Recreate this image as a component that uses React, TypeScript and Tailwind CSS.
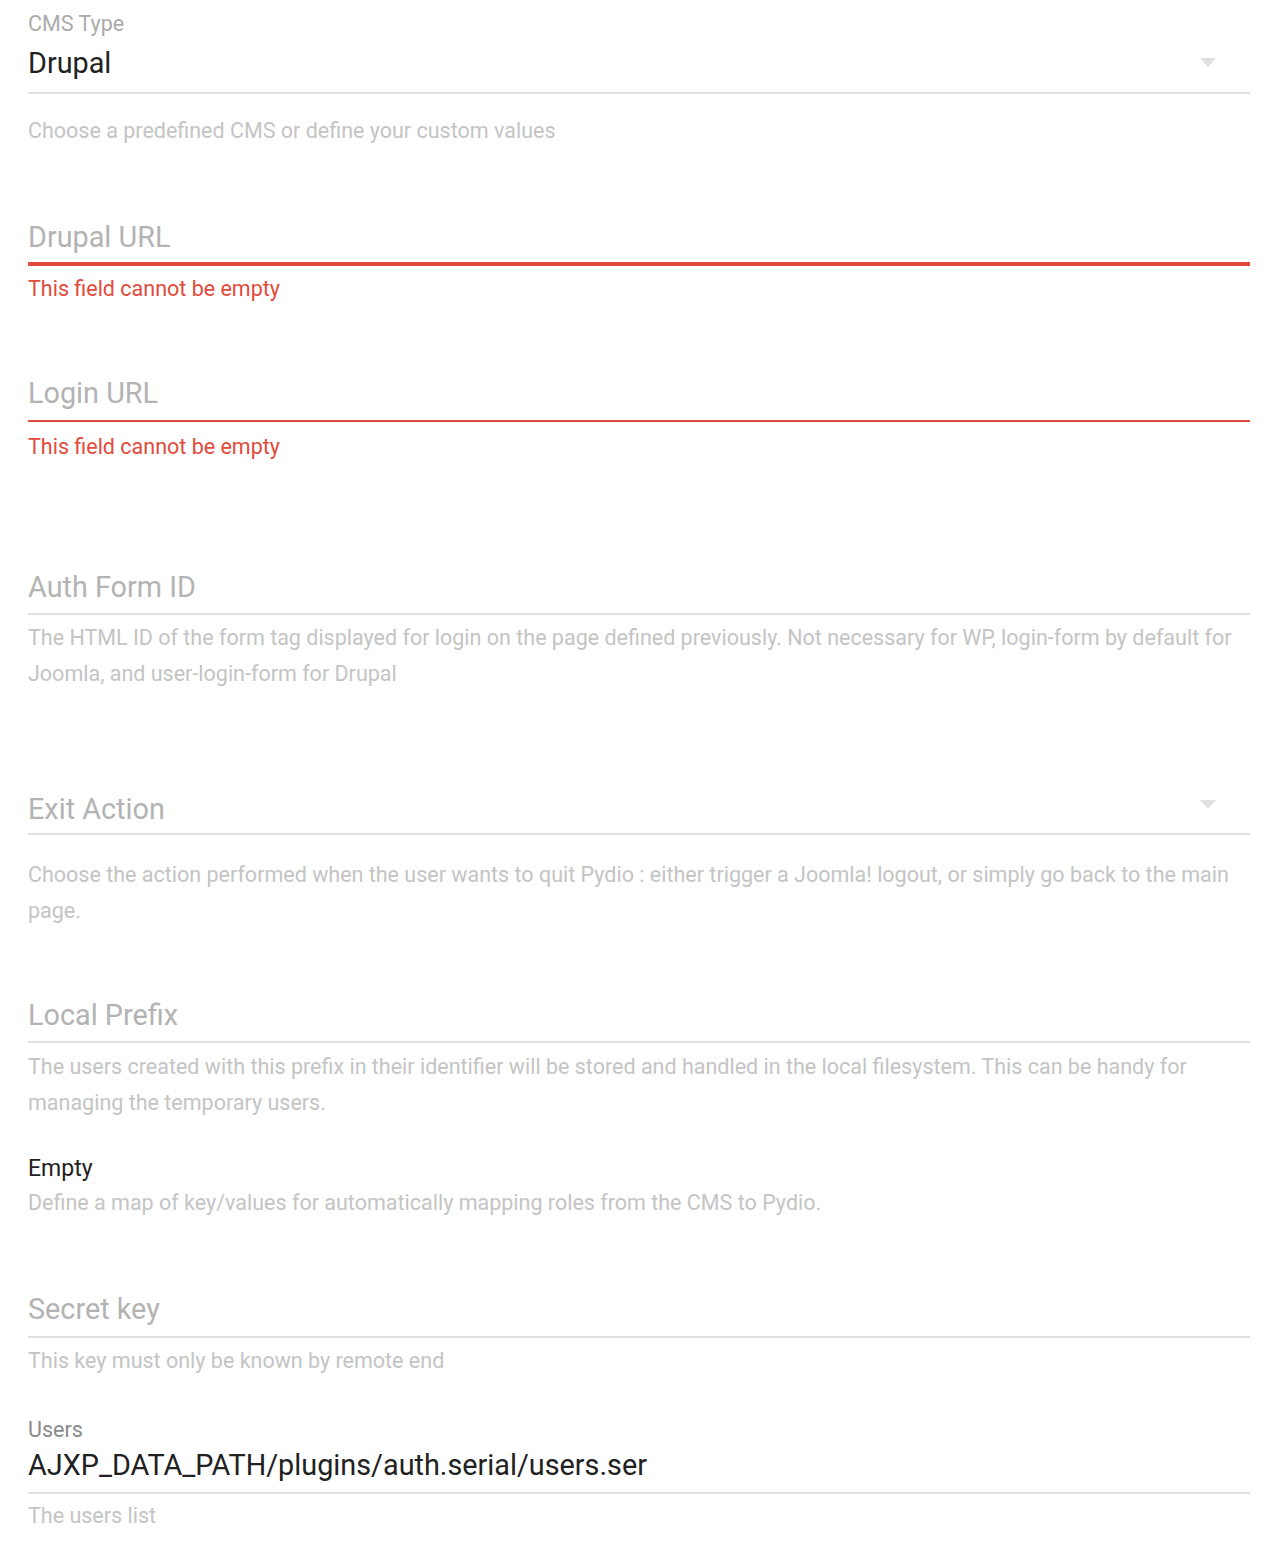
import React from "react";

const font = { fontFamily: "Roboto, 'Noto Sans', Arial, sans-serif" };

function Arrow({ top }: { top: string }) {
  return (
    <svg
      className={"absolute right-[34px] " + top}
      width="16"
      height="9"
      viewBox="0 0 16 9"
    >
      <polygon points="0,0 16,0 8,9" fill="#e0e0e0" />
    </svg>
  );
}

function Underline({ red = false, thick = false }: { red?: boolean; thick?: boolean }) {
  return (
    <div
      className={
        (red ? "bg-[#e24a3b] " : "bg-[#e0e0e0] ") + (thick ? "h-[4px]" : "h-[2px]")
      }
    />
  );
}

export default function App() {
  return (
    <div className="bg-white w-[1276px] min-h-[1562px] pl-[28px] pr-[26px]" style={font}>
      {/* CMS Type */}
      <div className="pt-[12px]">
        <div className="text-[21.5px] leading-[24px] text-[#ababab]">CMS Type</div>
        <div className="relative mt-[9px] h-[36px] text-[28.8px] leading-[36px] text-[#212121]">
          Drupal
          <Arrow top="top-[13px]" />
        </div>
        <div className="mt-[11px]">
          <Underline />
        </div>
        <div className="mt-[19px] text-[21.5px] leading-[36px] text-[#c4c4c4]">
          Choose a predefined CMS or define your custom values
        </div>
      </div>

      {/* Drupal URL */}
      <div className="mt-[69px]">
        <div className="h-[36px] text-[28.8px] leading-[36px] text-[#b3b3b3] pt-[1px]">Drupal URL</div>
        <div className="mt-[8px]">
          <Underline red thick />
        </div>
        <div className="mt-[11px] text-[21.5px] leading-[24px] text-[#e24a3b]">
          This field cannot be empty
        </div>
      </div>

      {/* Login URL */}
      <div className="mt-[73px]">
        <div className="h-[36px] text-[28.8px] leading-[36px] text-[#b3b3b3] pt-[1px]">Login URL</div>
        <div className="mt-[10px]">
          <Underline red />
        </div>
        <div className="mt-[13px] text-[21.5px] leading-[24px] text-[#e24a3b]">
          This field cannot be empty
        </div>
      </div>

      {/* Auth Form ID */}
      <div className="mt-[109px]">
        <div className="h-[36px] text-[28.8px] leading-[36px] text-[#b3b3b3] pt-[1px]">Auth Form ID</div>
        <div className="mt-[9px]">
          <Underline />
        </div>
        <div className="mt-[5px] text-[21.5px] leading-[36px] text-[#c4c4c4]">
          The HTML ID of the form tag displayed for login on the page defined previously. Not necessary for WP, login-form by default for Joomla, and user-login-form for Drupal
        </div>
      </div>

      {/* Exit Action */}
      <div className="mt-[98px]">
        <div className="relative h-[36px] text-[28.8px] leading-[36px] text-[#b3b3b3] pt-[1px]">
          Exit Action
          <Arrow top="top-[10px]" />
        </div>
        <div className="mt-[7px]">
          <Underline />
        </div>
        <div className="mt-[22px] text-[21.5px] leading-[36px] text-[#c4c4c4]">
          Choose the action performed when the user wants to quit Pydio : either trigger a Joomla! logout, or simply go back to the main page.
        </div>
      </div>

      {/* Local Prefix */}
      <div className="mt-[67px]">
        <div className="h-[36px] text-[28.8px] leading-[36px] text-[#b3b3b3] pt-[1px]">Local Prefix</div>
        <div className="mt-[9px]">
          <Underline />
        </div>
        <div className="mt-[6px] text-[21.5px] leading-[36px] text-[#c4c4c4]">
          The users created with this prefix in their identifier will be stored and handled in the local filesystem. This can be handy for managing the temporary users.
        </div>
      </div>

      {/* Empty */}
      <div className="mt-[35px]">
        <div className="text-[23px] leading-[24px] text-[#212121] pt-[1px]">Empty</div>
        <div className="mt-[10px] text-[21.5px] leading-[24px] text-[#c4c4c4]">
          Define a map of key/values for automatically mapping roles from the CMS to Pydio.
        </div>
      </div>

      {/* Secret key */}
      <div className="mt-[75px]">
        <div className="h-[36px] text-[28.8px] leading-[36px] text-[#b3b3b3] pt-[1px]">Secret key</div>
        <div className="mt-[10px]">
          <Underline />
        </div>
        <div className="mt-[5px] text-[21.5px] leading-[36px] text-[#c4c4c4]">
          This key must only be known by remote end
        </div>
      </div>

      {/* Users */}
      <div className="mt-[38px]">
        <div className="text-[21.5px] leading-[24px] text-[#8a8a8a] pt-[1px]">Users</div>
        <div className="mt-[5px] h-[36px] text-[28.8px] leading-[36px] text-[#212121]">
          AJXP_DATA_PATH/plugins/auth.serial/users.ser
        </div>
        <div className="mt-[9px]">
          <Underline />
        </div>
        <div className="mt-[4px] text-[21.5px] leading-[36px] text-[#c4c4c4]">The users list</div>
      </div>
    </div>
  );
}
